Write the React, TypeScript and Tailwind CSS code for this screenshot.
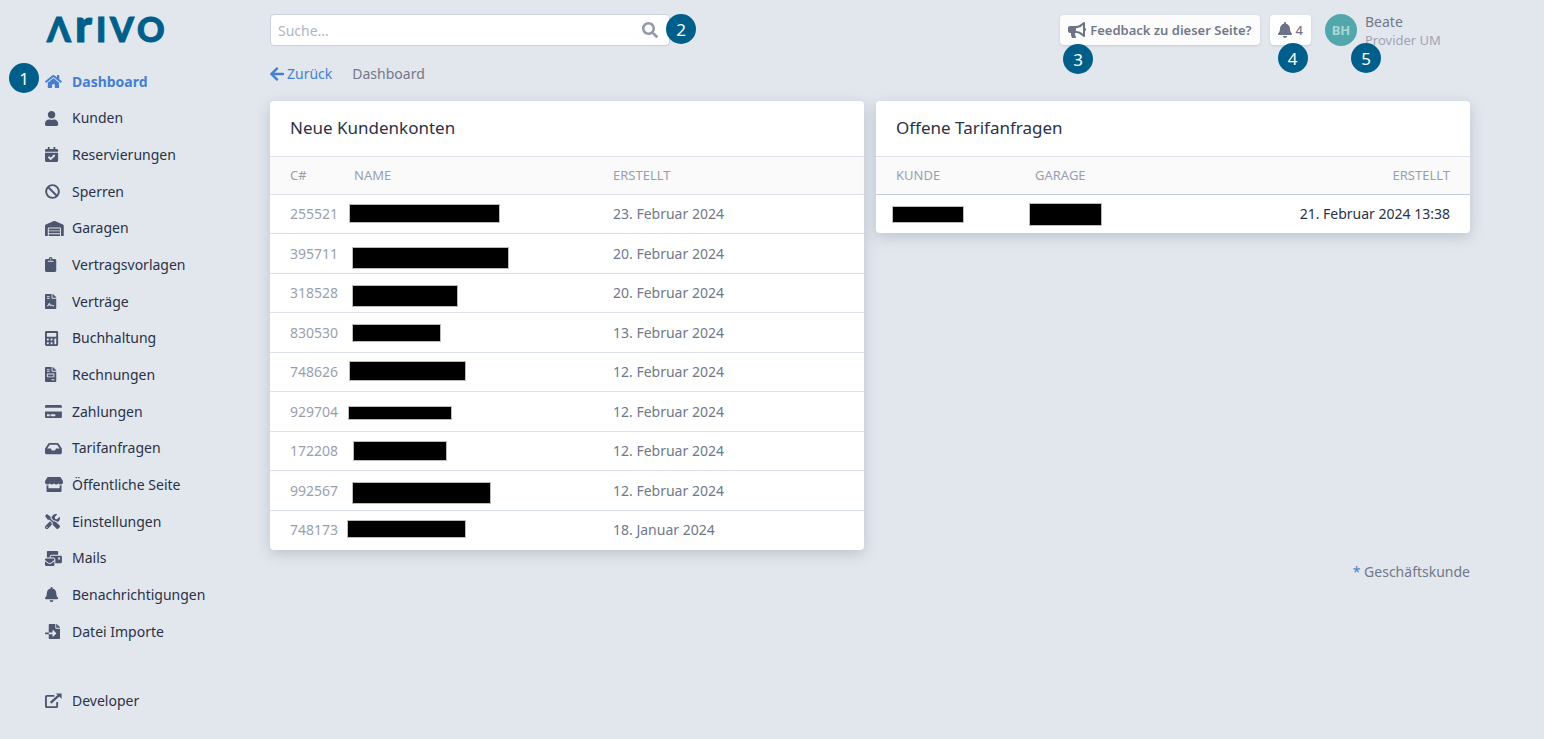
import type { ReactNode, SVGProps } from 'react'
import {
  FaArrowLeft,
  FaBan,
  FaBell,
  FaBullhorn,
  FaCalculator,
  FaCalendarCheck,
  FaClipboard,
  FaCreditCard,
  FaFileContract,
  FaFileImport,
  FaFileInvoice,
  FaHome,
  FaInbox,
  FaMailBulk,
  FaSearch,
  FaStore,
  FaTools,
  FaUser,
  FaWarehouse
} from 'react-icons/fa'

type IconComponent = (props: { className?: string; preserveAspectRatio?: string }) => ReactNode
type NavEntry = { label: string; icon: IconComponent; active?: boolean }
type Bar = { left: number; top: number; width: number; height: number }
type Customer = { id: string; created: string; bar: Bar }

const navEntries: NavEntry[] = [
  { label: 'Dashboard', icon: FaHome, active: true },
  { label: 'Kunden', icon: FaUser },
  { label: 'Reservierungen', icon: FaCalendarCheck },
  { label: 'Sperren', icon: FaBan },
  { label: 'Garagen', icon: FaWarehouse },
  { label: 'Vertragsvorlagen', icon: FaClipboard },
  { label: 'Verträge', icon: FaFileContract },
  { label: 'Buchhaltung', icon: FaCalculator },
  { label: 'Rechnungen', icon: FaFileInvoice },
  { label: 'Zahlungen', icon: FaCreditCard },
  { label: 'Tarifanfragen', icon: FaInbox },
  { label: 'Öffentliche Seite', icon: FaStore },
  { label: 'Einstellungen', icon: FaTools },
  { label: 'Mails', icon: FaMailBulk },
  { label: 'Benachrichtigungen', icon: FaBell },
  { label: 'Datei Importe', icon: FaFileImport }
]

const customers: Customer[] = [
  { id: '255521', created: '23. Februar 2024', bar: { left: 3, top: 9, width: 151, height: 19 } },
  { id: '395711', created: '20. Februar 2024', bar: { left: 6, top: 13, width: 157, height: 22 } },
  { id: '318528', created: '20. Februar 2024', bar: { left: 6, top: 11, width: 106, height: 22 } },
  { id: '830530', created: '13. Februar 2024', bar: { left: 6, top: 11, width: 89, height: 18 } },
  { id: '748626', created: '12. Februar 2024', bar: { left: 3, top: 8, width: 117, height: 20 } },
  { id: '929704', created: '12. Februar 2024', bar: { left: 2, top: 14, width: 104, height: 14 } },
  { id: '172208', created: '12. Februar 2024', bar: { left: 7, top: 9, width: 94, height: 20 } },
  { id: '992567', created: '12. Februar 2024', bar: { left: 6, top: 11, width: 139, height: 22 } },
  { id: '748173', created: '18. Januar 2024', bar: { left: 1, top: 9, width: 119, height: 18 } }
]

const Logo = () => (
  <svg
    viewBox='0 0 120 28'
    role='img'
    aria-label='Arivo'
    className="h-7 w-[120px] overflow-visible fill-[#005f8a] stroke-[#005f8a] stroke-1 font-['Lato','Inter',sans-serif] font-black"
  >
    <text x='0' y='26' fontSize='34'>Λ</text>
    <text x='28' y='26' fontSize='45'>r</text>
    <text x='49' y='26' fontSize='34'>I</text>
    <text x='63' y='26' fontSize='34'>V</text>
    <text x='90' y='26' fontSize='34'>O</text>
  </svg>
)

const ExternalLinkIcon = (props: SVGProps<SVGSVGElement>) => (
  <svg viewBox='0 0 18 16' fill='none' stroke='currentColor' strokeWidth='2' {...props}>
    <path d='M10 3H2a1 1 0 0 0-1 1v10a1 1 0 0 0 1 1h10a1 1 0 0 0 1-1V9.5' />
    <path d='M6 10.5 14.5 2.8' strokeWidth='2.4' />
    <path d='M11.6.4h5.6a.5.5 0 0 1 .5.5v5.3z' fill='currentColor' stroke='none' />
  </svg>
)

// Numbered hint that floats over the element it explains
const Marker = ({ children, className }: { children: ReactNode; className: string }) => (
  <span
    className={`absolute z-10 flex size-[30px] items-center justify-center rounded-full bg-[#005f8a] text-[17px] leading-none text-white ${className}`}
  >
    {children}
  </span>
)

const Redacted = ({ bar }: { bar: Bar }) => (
  <span className='absolute border border-[#bbbbbb] bg-black' style={bar} />
)

const NavItem = ({ label, icon: Icon, active }: NavEntry) => (
  <a href='#' className={`flex h-full items-center ${active ? 'font-bold text-[#467fd0]' : ''}`}>
    <span className='w-[27px]'>
      <Icon preserveAspectRatio='xMinYMid' className={`h-[15px] w-5 ${active ? '' : 'text-[#4d566f]'}`} />
    </span>
    {label}
  </a>
)

const Card = ({ title, children }: { title: string; children: ReactNode }) => (
  <section className='overflow-hidden rounded bg-white shadow-[0_4px_14px_rgba(60,75,90,0.22)]'>
    <h2 className='px-5 pt-[13px] pb-[14px] text-[17px] leading-7'>{title}</h2>
    {children}
  </section>
)

export default function App() {
  return (
    <div className="flex min-h-screen bg-[#e2e7ee] font-['Noto_Sans',sans-serif] text-sm text-[#2b3147]">
      <aside className='w-[270px] shrink-0 pt-4 pb-6 pl-[45px]'>
        <a href='#' className='block pl-[2px]'>
          <Logo />
        </a>
        <nav className='relative mt-[19px]'>
          <Marker className='top-0 -left-9'>1</Marker>
          <ul>
            {navEntries.map((entry) => (
              <li key={entry.label} className='h-[37px] nth-[3n+2]:h-9'>
                <NavItem {...entry} />
              </li>
            ))}
            <li className='mt-8 h-[37px]'>
              <NavItem label='Developer' icon={ExternalLinkIcon} />
            </li>
          </ul>
        </nav>
      </aside>

      <main className='min-w-0 flex-1 pt-[14px] pr-[74px]'>
        <header className='flex h-8 items-center'>
          <form className='relative w-[400px]'>
            <input
              type='search'
              aria-label='Suche'
              placeholder='Suche...'
              className='h-8 w-full rounded border border-[#cbd1de] bg-white pr-10 pl-[7px] outline-none placeholder:text-[#b0b6c2]'
            />
            <button type='button' aria-label='Suchen' className='absolute top-2 right-3 text-[#9399ab]'>
              <FaSearch className='size-4' />
            </button>
            <Marker className='top-0 -right-[26px]'>2</Marker>
          </form>

          <div className='ml-auto flex items-center'>
            <div className='relative'>
              <button
                type='button'
                className='flex h-[30px] items-center gap-1 rounded-sm bg-[#fcfcfc] px-2 text-[13px] font-semibold text-[#737888] shadow-sm'
              >
                <FaBullhorn className='h-4 w-[18px] text-[#6c7389]' />
                Feedback zu dieser Seite?
              </button>
              <Marker className='top-[29px] left-[3px]'>3</Marker>
            </div>
            <div className='relative ml-[10px]'>
              <button
                type='button'
                className='flex h-[30px] items-center gap-1 rounded-sm bg-white px-2 text-[13px] font-medium text-[#737888] shadow-sm'
              >
                <FaBell className='h-4 w-[14px] text-[#6c7389]' />4
              </button>
              <Marker className='top-7 left-2'>4</Marker>
            </div>
            <div className='relative ml-[14px] flex w-[145px] items-center gap-2'>
              <span className='flex size-8 items-center justify-center rounded-full bg-[#52a7ab] text-[13px] font-bold text-[#a9d8d8]'>
                BH
              </span>
              <div className='pt-[2px]'>
                <p className='leading-[18px] text-[#717889]'>Beate</p>
                <p className='text-[13px] leading-[18px] text-[#a0a5b5]'>Provider UM</p>
              </div>
              <Marker className='top-8 left-[26px]'>5</Marker>
            </div>
          </div>
        </header>

        <div className='mt-[18px] flex items-center gap-5 leading-5 text-[#717889]'>
          <a href='#' className='flex items-center gap-[3px] text-[#467fd0]'>
            <FaArrowLeft className='h-4 w-[14px]' />
            Zurück
          </a>
          <span>Dashboard</span>
        </div>

        <div className='mt-[17px] grid grid-cols-2 items-start gap-3'>
          <Card title='Neue Kundenkonten'>
            <table className='w-full table-fixed text-left text-[#717889]'>
              <thead className='border-y border-[#dde2ea] bg-[#fafafa] text-[13px] text-[#9a9fb0]'>
                <tr className='h-[38px]'>
                  <th className='w-[76px] pl-5 font-normal'>C#</th>
                  <th className='w-[259px] px-2 font-normal'>NAME</th>
                  <th className='px-2 font-normal'>ERSTELLT</th>
                </tr>
              </thead>
              <tbody className='divide-y divide-[#dde2ea]'>
                {customers.map(({ id, created, bar }) => (
                  <tr key={id} className='odd:h-[39px] even:h-10'>
                    <td className='pl-5 text-[#9a9fb0]'>{id}</td>
                    <td className='relative'>
                      <Redacted bar={bar} />
                    </td>
                    <td className='px-2'>{created}</td>
                  </tr>
                ))}
              </tbody>
            </table>
          </Card>

          <Card title='Offene Tarifanfragen'>
            <table className='w-full table-fixed text-left'>
              <thead className='border-t border-b border-t-[#dde2ea] border-b-[#c3ccd8] bg-[#fafafa] text-[13px] text-[#9a9fb0]'>
                <tr className='h-[38px]'>
                  <th className='w-[151px] pl-5 font-normal'>KUNDE</th>
                  <th className='px-2 font-normal'>GARAGE</th>
                  <th className='pr-5 text-right font-normal'>ERSTELLT</th>
                </tr>
              </thead>
              <tbody>
                <tr className='h-[38px]'>
                  <td className='relative'>
                    <Redacted bar={{ left: 16, top: 11, width: 72, height: 17 }} />
                  </td>
                  <td className='relative'>
                    <Redacted bar={{ left: 2, top: 8, width: 73, height: 23 }} />
                  </td>
                  <td className='pr-5 text-right'>21. Februar 2024 13:38</td>
                </tr>
              </tbody>
            </table>
          </Card>
        </div>

        <p className='mt-3 text-right leading-5 text-[#717889]'>
          <span className='text-[#467fd0]'>*</span> Geschäftskunde
        </p>
      </main>
    </div>
  )
}
